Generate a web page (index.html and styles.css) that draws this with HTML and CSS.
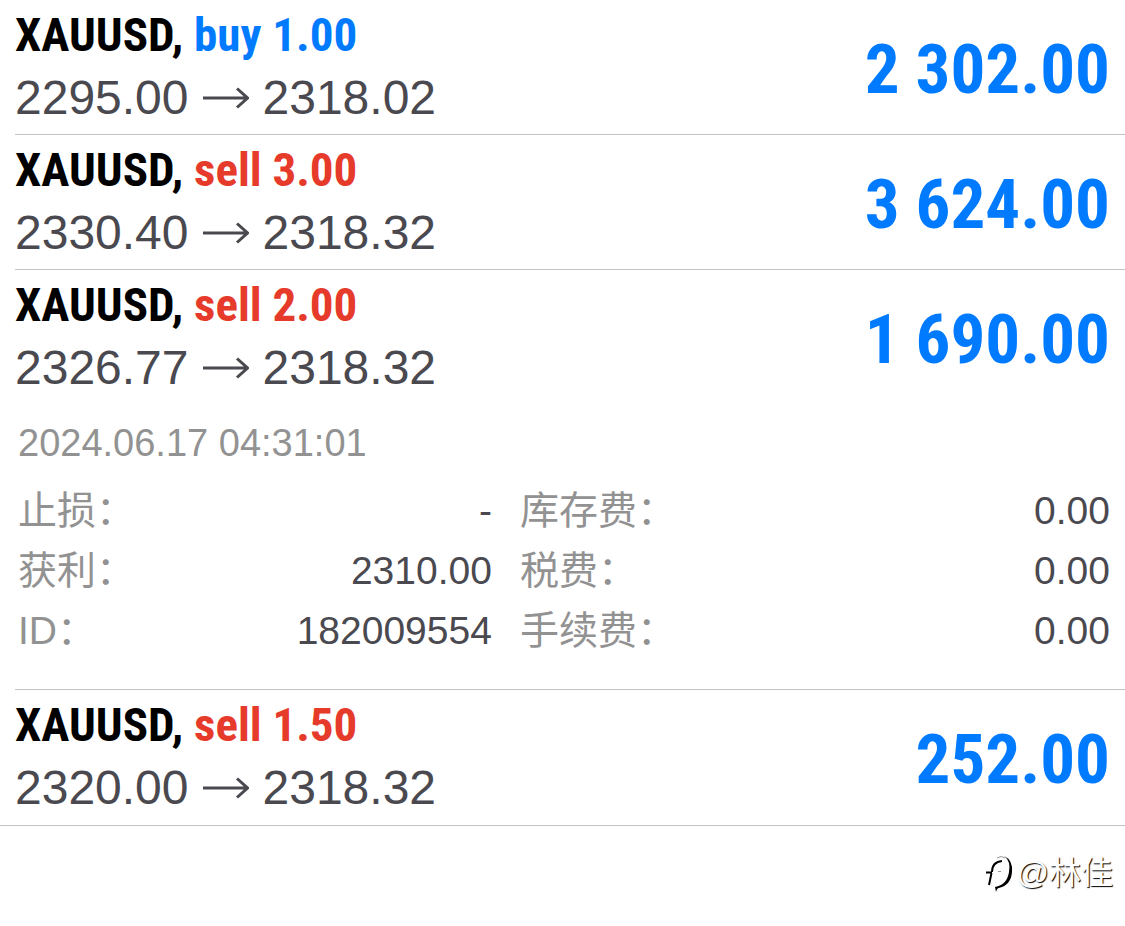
FILE: index.html
```html
<!DOCTYPE html>
<html lang="zh-CN">
<head>
<meta charset="utf-8">
<meta name="viewport" content="width=device-width, initial-scale=1">
<title>XAUUSD</title>
<link rel="stylesheet" href="styles.css">
</head>
<body>
<svg class="defs" aria-hidden="true">
  <symbol id="arrow" viewBox="0 0 46 22"><path d="M0 11H44M34 1.500L44.500 11L34 20.500"/></symbol>
</svg>
<main class="positions">
  <article class="position">
    <div class="summary">
      <div>
        <h2 class="title"><span class="symbol">XAUUSD, </span><span class="buy">buy 1.00</span></h2>
        <p class="prices"><span>2295.00</span><svg class="arrow" aria-hidden="true"><use href="#arrow"/></svg><span>2318.02</span></p>
      </div>
      <strong class="profit">2 302.00</strong>
    </div>
  </article>
  <article class="position">
    <div class="summary">
      <div>
        <h2 class="title"><span class="symbol">XAUUSD, </span><span class="sell">sell 3.00</span></h2>
        <p class="prices"><span>2330.40</span><svg class="arrow" aria-hidden="true"><use href="#arrow"/></svg><span>2318.32</span></p>
      </div>
      <strong class="profit">3 624.00</strong>
    </div>
  </article>
  <article class="position">
    <div class="summary">
      <div>
        <h2 class="title"><span class="symbol">XAUUSD, </span><span class="sell">sell 2.00</span></h2>
        <p class="prices"><span>2326.77</span><svg class="arrow" aria-hidden="true"><use href="#arrow"/></svg><span>2318.32</span></p>
      </div>
      <strong class="profit">1 690.00</strong>
    </div>
    <div class="details">
      <time class="opened" datetime="2024-06-17T04:31:01">2024.06.17 04:31:01</time>
      <div class="columns">
        <dl class="fields">
          <div class="field"><dt>止损：</dt><dd>-</dd></div>
          <div class="field"><dt>获利：</dt><dd>2310.00</dd></div>
          <div class="field"><dt>ID：</dt><dd>182009554</dd></div>
        </dl>
        <dl class="fields">
          <div class="field"><dt>库存费：</dt><dd>0.00</dd></div>
          <div class="field"><dt>税费：</dt><dd>0.00</dd></div>
          <div class="field"><dt>手续费：</dt><dd>0.00</dd></div>
        </dl>
      </div>
    </div>
  </article>
  <article class="position">
    <div class="summary">
      <div>
        <h2 class="title"><span class="symbol">XAUUSD, </span><span class="sell">sell 1.50</span></h2>
        <p class="prices"><span>2320.00</span><svg class="arrow" aria-hidden="true"><use href="#arrow"/></svg><span>2318.32</span></p>
      </div>
      <strong class="profit">252.00</strong>
    </div>
  </article>
</main>
<footer class="credit">
  <svg class="logo" viewBox="0 0 30 38" aria-hidden="true">
    <path class="line" d="M5 31L7.500 19M2 18.500H8M8 18Q8 8 18 7"/>
    <path class="hair" d="M14 17.500H17M13 4Q17 1 21 4"/>
    <path class="solid" d="M20 2Q29 6 28 18Q27 31 15 34Q13 34 12 38L11 33Q23 31 25 18Q27 7 20 2Z"/>
  </svg>
  <span>@林佳</span>
</footer>
</body>
</html>
```
FILE: styles.css
```css
* { box-sizing: border-box; }
body {
  margin: 0;
  background: #fff;
  color: #4a4950;
  font-family: "Liberation Sans", "Noto Sans CJK SC", sans-serif;
}
h2, p, dl, dd { margin: 0; }
.defs { display: none; }
.positions { border-bottom: 1px solid #c3c3c6; }
.position { margin-left: 15px; border-bottom: 1px solid #c3c3c6; }
.position:last-child { padding-bottom: 1px; border-bottom: 0; }
.summary {
  display: flex;
  justify-content: space-between;
  align-items: center;
  padding: 3px 15px 5px 0;
}
.title {
  font-family: "Roboto Condensed", "Liberation Sans Narrow", "Liberation Sans", sans-serif;
  font-weight: 700;
  font-size: 47px;
  line-height: 63px;
  white-space: pre;
}
.symbol { color: #000; }
.buy { color: #007aff; }
.sell { color: #e63a2b; }
.prices {
  display: flex;
  align-items: center;
  gap: 14px;
  font-size: 48px;
  line-height: 63px;
}
.arrow {
  width: 46px;
  height: 22px;
  fill: none;
  stroke: #4a4950;
  stroke-width: 3;
}
.profit {
  padding-top: 8px;
  color: #007aff;
  font-family: "Roboto Condensed", "Liberation Sans Narrow", "Liberation Sans", sans-serif;
  font-size: 69px;
  line-height: 80px;
}
.details { padding: 9px 15px 28px 3px; }
.opened {
  display: block;
  color: #929292;
  font-size: 38px;
  line-height: 60px;
}
.columns {
  display: grid;
  grid-template-columns: 473fr 589fr;
  gap: 28px;
  padding-top: 8px;
}
.field {
  display: flex;
  justify-content: space-between;
  font-size: 39px;
  line-height: 60px;
}
.field dt { color: #929292; }
.credit {
  display: flex;
  justify-content: flex-end;
  align-items: center;
  gap: 3px;
  padding: 23px 12px;
  color: #fff;
  font-size: 32px;
  line-height: 48px;
  text-shadow: 1px 1px 1px #000;
}
.logo { width: 30px; height: 38px; }
.line { fill: none; stroke: #000; stroke-width: 2; }
.hair { fill: none; stroke: #999; stroke-width: 1; }
.solid { fill: #000; }
```
